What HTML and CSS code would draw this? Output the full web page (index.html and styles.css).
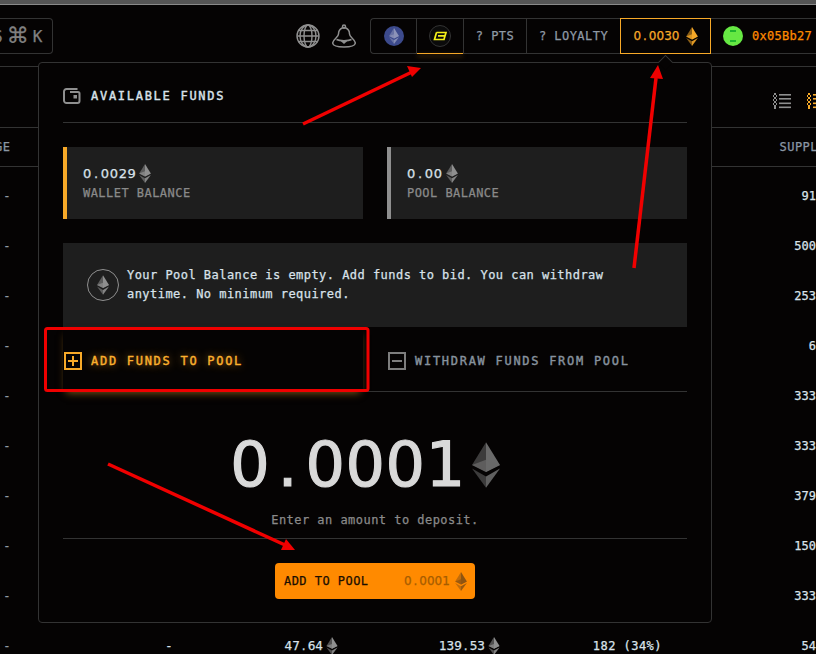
FILE: index.html
```html
<!DOCTYPE html>
<html lang="en">
<head>
<meta charset="utf-8">
<title>Available funds</title>
<link rel="stylesheet" href="styles.css">
</head>
<body>
<svg class="defs" width="0" height="0" aria-hidden="true">
  <symbol id="eth" viewBox="0 0 16 26">
    <polygon points="8,0 0,13 8,17" fill="currentColor" opacity=".55"/>
    <polygon points="8,0 16,13 8,17" fill="currentColor"/>
    <polygon points="8,10 0,13 8,17 16,13" fill="currentColor" opacity=".75"/>
    <polygon points="0,15 8,26 8,19.5" fill="currentColor" opacity=".55"/>
    <polygon points="16,15 8,26 8,19.5" fill="currentColor" opacity=".9"/>
  </symbol>
  <symbol id="list" viewBox="0 0 18 16">
    <g fill="currentColor">
      <rect x="6" y="1" width="12" height="1.6"/><rect x="6" y="5" width="12" height="1.6"/>
      <rect x="6" y="9.5" width="12" height="1.6"/><rect x="6" y="13.5" width="12" height="1.6"/>
      <rect x="1" y="0" width="2" height="2"/><rect x="0" y="2" width="1" height="2"/><rect x="3" y="2" width="1" height="2"/>
      <rect x="1" y="4" width="2" height="2"/><rect x="0" y="6" width="1" height="2"/><rect x="3" y="6" width="1" height="2"/>
      <rect x="1" y="8" width="2" height="2"/><rect x="0" y="10" width="1" height="2"/><rect x="3" y="10" width="1" height="2"/>
      <rect x="1" y="12" width="2" height="2"/><rect x="1" y="14" width="2" height="2"/>
    </g>
  </symbol>
</svg>

<div class="page">
  <div class="strip"></div>

  <header class="header">
    <div class="search"><span class="search-s">S</span><span class="search-cmd">⌘</span><span>K</span></div>
    <div class="header-right">
      <svg class="hicon" viewBox="0 0 24 24" aria-hidden="true">
        <g fill="none" stroke="#8f8f8f" stroke-width="1.4">
          <circle cx="12" cy="12" r="11"/><ellipse cx="12" cy="12" rx="4" ry="11"/><ellipse cx="12" cy="12" rx="8" ry="11"/>
          <path d="M1 12h22M2.500 6.500h19M2.500 17.500h19"/>
        </g>
      </svg>
      <svg class="hicon" viewBox="0 0 24 24" aria-hidden="true">
        <g fill="none" stroke="#8f8f8f" stroke-width="1.500">
          <circle cx="12" cy="2.500" r="1.500"/>
          <path d="M10 4C8 5 6.500 7 6.500 10c0 3.500-5.500 5-5.800 9 0 3 6.300 4 11.300 4s11.300-1 11.300-4c-.3-4-5.800-5.500-5.800-9 0-3-1.500-5-3.500-6z"/>
          <path d="M4.500 15.500c3 1.500 12 1.500 15 0"/>
        </g>
        <polygon points="8,16.500 16,16.500 12,20" fill="#8f8f8f"/>
      </svg>
      <nav class="group">
        <div class="cell cell-net"><span class="net-dot"><svg class="eth-net"><use href="#eth"/></svg></span></div>
        <div class="cell cell-blast">
          <span class="blast-dot">
            <svg class="blast" viewBox="0 0 14 10" aria-hidden="true"><path d="M3.500 1.500H13l-1 3.300H5M12 4.800 11 8.500H1.500L3.500 1.500" fill="none" stroke="#f4f018" stroke-width="1.700"/></svg>
          </span>
        </div>
        <div class="cell cell-pts">? PTS</div>
        <div class="cell cell-loyalty">? LOYALTY</div>
        <div class="cell cell-balance num"><span>0<span class="dot">.</span>0030</span><svg class="eth-bal"><use href="#eth"/></svg></div>
        <div class="user">
          <span class="avatar"><i></i><i></i></span>
          <span class="address">0x05Bb27</span>
        </div>
      </nav>
    </div>
  </header>

  <section class="table">
    <div class="toolbar">
      <svg class="list-icon"><use href="#list"/></svg>
      <svg class="list-icon list-on"><use href="#list"/></svg>
    </div>
    <div class="thead"><span>GE</span><span>SUPPL</span></div>
    <div class="tbody">
      <div class="row"><span class="c1">-</span><span class="c6">91</span></div>
      <div class="row"><span class="c1">-</span><span class="c6">500</span></div>
      <div class="row"><span class="c1">-</span><span class="c6">253</span></div>
      <div class="row"><span class="c1">-</span><span class="c6">6</span></div>
      <div class="row"><span class="c1">-</span><span class="c6">333</span></div>
      <div class="row"><span class="c1">-</span><span class="c6">333</span></div>
      <div class="row"><span class="c1">-</span><span class="c6">379</span></div>
      <div class="row"><span class="c1">-</span><span class="c6">150</span></div>
      <div class="row"><span class="c1">-</span><span class="c6">333</span></div>
      <div class="row">
        <span class="c1">-</span>
        <span class="c2">-</span>
        <span class="c3 num"><span>47<span class="dot">.</span>64</span><svg class="eth-row"><use href="#eth"/></svg></span>
        <span class="c4 num"><span>139<span class="dot">.</span>53</span><svg class="eth-row"><use href="#eth"/></svg></span>
        <span class="c5">182 (34%)</span>
        <span class="c6">54</span>
      </div>
    </div>
  </section>

  <aside class="modal">
    <span class="notch"></span>
    <div class="modal-head">
      <svg class="wallet" viewBox="0 0 18 16" aria-hidden="true">
        <path d="M14.500 1H3.500A2.500 2.500 0 0 0 1 3.500v9A2.500 2.500 0 0 0 3.500 15h11a2 2 0 0 0 2-2V5.500A1.500 1.500 0 0 0 15 4H7" fill="none" stroke="#8f8f8f" stroke-width="2"/>
        <rect x="10.500" y="7" width="3.500" height="3.500" fill="#8f8f8f"/>
      </svg>
      <h2 class="title">AVAILABLE FUNDS</h2>
    </div>

    <div class="cards">
      <div class="card card-wallet">
        <div class="card-value num"><span>0<span class="dot">.</span>0029</span><svg class="eth-card"><use href="#eth"/></svg></div>
        <div class="card-label">WALLET BALANCE</div>
      </div>
      <div class="card card-pool">
        <div class="card-value num"><span>0<span class="dot">.</span>00</span><svg class="eth-card"><use href="#eth"/></svg></div>
        <div class="card-label">POOL BALANCE</div>
      </div>
    </div>

    <div class="info">
      <span class="info-icon"><svg class="eth-info"><use href="#eth"/></svg></span>
      <p class="info-text">Your Pool Balance is empty. Add funds to bid. You can withdraw<br>anytime. No minimum required.</p>
    </div>

    <div class="tabs">
      <div class="tab tab-on">
        <svg class="tab-icon" viewBox="0 0 18 18" aria-hidden="true"><rect x="1" y="1" width="16" height="16" fill="none" stroke="currentColor" stroke-width="2"/><path d="M4 9h10M9 4v10" stroke="currentColor" stroke-width="2"/></svg>
        <span>ADD FUNDS TO POOL</span>
      </div>
      <div class="tab">
        <svg class="tab-icon" viewBox="0 0 18 18" aria-hidden="true"><rect x="1" y="1" width="16" height="16" fill="none" stroke="currentColor" stroke-width="2"/><path d="M4 9h10" stroke="currentColor" stroke-width="2"/></svg>
        <span>WITHDRAW FUNDS FROM POOL</span>
      </div>
    </div>

    <div class="amount">
      <div class="amount-value num"><span>0<span class="dot">.</span>0001</span><svg class="eth-big"><use href="#eth"/></svg></div>
      <div class="amount-hint">Enter an amount to deposit.</div>
    </div>

    <div class="actions">
      <button class="submit" type="button">
        <span>ADD TO POOL</span>
        <span class="submit-amt num"><span>0<span class="dot">.</span>0001</span><svg class="eth-btn"><use href="#eth"/></svg></span>
      </button>
    </div>
  </aside>

  <svg class="marks" viewBox="0 0 816 654" aria-hidden="true">
    <rect x="45.500" y="328.500" width="322.500" height="62" rx="2" fill="none" stroke="#f00000" stroke-width="3"/>
    <g stroke="#f00000" stroke-width="3.500" fill="#f00000">
      <line x1="303" y1="124" x2="412" y2="72"/>
      <polygon points="421,68 407,66 412,77" stroke="none"/>
      <line x1="634" y1="268" x2="656" y2="78"/>
      <polygon points="658,65 650,78 663,79" stroke="none"/>
      <line x1="108" y1="464" x2="285" y2="545"/>
      <polygon points="295,550 281,550 286,539" stroke="none"/>
    </g>
  </svg>
</div>
</body>
</html>
```

FILE: styles.css
```css
* { box-sizing: border-box; }
html, body { margin: 0; padding: 0; background: #050303; }
body {
  width: 816px;
  height: 654px;
  overflow: hidden;
  font-family: "DejaVu Sans Mono", "Liberation Mono", monospace;
  font-size: 12px;
  letter-spacing: .46px;
  color: #d9e2ea;
  -webkit-text-stroke: .25px currentColor;
}
svg { display: block; flex: none; }
.defs { position: absolute; }
.page { position: relative; width: 816px; height: 654px; overflow: hidden; }

/* numbers: plain zeros with the point on a full-width cell */
.num { font-family: "DejaVu Sans", "Liberation Sans", sans-serif; letter-spacing: .05px; }
.dot { padding: 0 .16em; }

.strip { height: 5px; background: #555; border-bottom: 1px solid #8a8a8a; }

/* header */
.header {
  height: 62px;
  border-bottom: 1px solid #333;
  display: flex;
  align-items: flex-start;
  padding-top: 13px;
}
.search {
  width: 53px;
  height: 36px;
  border: 1px solid #333;
  border-left: 0;
  border-radius: 0 4px 4px 0;
  display: flex;
  align-items: center;
  gap: 4px;
  color: #808080;
  font-size: 16px;
  letter-spacing: 0;
  overflow: hidden;
  flex: none;
}
.search-s { margin-left: -7px; }
.search-cmd { font-family: "DejaVu Sans", sans-serif; font-size: 22px; line-height: 1; }
.header-right { margin-left: auto; display: flex; align-items: center; height: 36px; }
.hicon { width: 24px; height: 24px; margin-right: 12px; }
.hicon + .hicon { margin-right: 14px; }
.group {
  display: flex;
  height: 36px;
  width: 446px;
  border: 1px solid #333;
  border-right: 0;
  border-radius: 4px 0 0 4px;
  color: #8f9aa6;
}
.cell {
  display: flex;
  align-items: center;
  justify-content: center;
  border-right: 1px solid #333;
  flex: none;
}
.cell-net { width: 46px; }
.cell-blast { width: 47px; position: relative; }
.cell-blast::after {
  content: "";
  position: absolute;
  left: 0; right: 0; bottom: -1px;
  height: 1px;
  background: #f7a928;
  box-shadow: 0 2px 5px rgba(247,169,40,.55);
}
.cell-pts { width: 63px; }
.cell-loyalty { width: 93px; border-right: 0; }
.cell-balance {
  width: 91px;
  height: 36px;
  margin-top: -1px;
  border: 1px solid #f7a928;
  color: #f7a928;
  gap: 6px;
}
.net-dot {
  width: 20px; height: 20px; border-radius: 50%;
  background: #3c4a8c;
  display: flex; align-items: center; justify-content: center;
  color: #8c93b8;
}
.eth-net { width: 10px; height: 16px; }
.blast-dot {
  width: 22px; height: 22px; border-radius: 50%;
  background: #0b0b0b;
  border: 1px solid #333;
  display: flex; align-items: center; justify-content: center;
}
.blast { width: 14px; height: 10px; }
.eth-bal { width: 12px; height: 19px; color: #f7a928; }
.user { display: flex; align-items: center; margin-left: 12px; gap: 9px; flex: none; }
.avatar {
  width: 20px; height: 20px; border-radius: 50%;
  background: #66e843;
  display: flex; flex-direction: column; align-items: center; justify-content: center;
  gap: 8px;
  flex: none;
}
.avatar i { display: block; width: 6px; height: 2px; background: #1fb52e; }
.address { color: #ff8a00; letter-spacing: .28px; white-space: nowrap; }

/* table behind the popover */
.table { color: #d9e2ea; }
.toolbar {
  height: 61px;
  border-bottom: 1px solid #333;
  display: flex;
  justify-content: flex-end;
  align-items: flex-start;
  gap: 16px;
  padding-top: 26px;
  margin-right: -9px;
  color: #8f8f8f;
}
.list-icon { width: 18px; height: 16px; }
.list-on { color: #f7a928; }
.thead {
  height: 39px;
  border-bottom: 1px solid #333;
  display: flex;
  justify-content: space-between;
  align-items: center;
  color: #8b97a5;
  letter-spacing: .46px;
}
.thead span:first-child { margin-left: -5px; }
.thead span:last-child { margin-right: -2px; }
.tbody { padding-top: 4px; }
.row {
  height: 50px;
  display: grid;
  grid-template-columns: 14px 162px 162px 162px 162px 154px;
  align-items: center;
}
.row > span { text-align: right; white-space: nowrap; }
.row > .c1 { text-align: center; color: #8f9aa6; }
.c2 { padding-right: 3px; }
.row > .c3, .row > .c4 { display: flex; align-items: center; justify-content: flex-end; gap: 3px; }
.c6 { grid-column: 6; letter-spacing: 0; }
.eth-row { width: 12px; height: 18px; color: #8f8f8f; }

/* popover */
.modal {
  position: absolute;
  left: 38px;
  top: 62px;
  width: 674px;
  height: 561px;
  background: #050303;
  border: 1px solid #333;
  border-radius: 4px;
  padding: 0 24px;
}
.notch {
  position: absolute;
  right: 40px;
  top: -6px;
  width: 11px;
  height: 11px;
  background: #050303;
  border-left: 1px solid #333;
  border-top: 1px solid #333;
  transform: rotate(45deg);
}
.modal-head {
  height: 60px;
  border-bottom: 1px solid #333;
  display: flex;
  align-items: center;
  gap: 10px;
  padding-top: 7px;
}
.wallet { width: 18px; height: 16px; }
.title {
  margin: 0;
  font-size: 12px;
  font-weight: 400;
  letter-spacing: 1.72px;
  -webkit-text-stroke: .4px currentColor;
}

.cards {
  margin-top: 24px;
  display: grid;
  grid-template-columns: 300px 300px;
  gap: 24px;
}
.card {
  height: 72px;
  background: #1e1e1e;
  border-left: 4px solid #f7a928;
  padding: 16px 0 0 16px;
}
.card-pool { border-left-color: #8f8f8f; }
.card-value {
  display: flex;
  align-items: center;
  gap: 3px;
  height: 20px;
  font-size: 13px;
  letter-spacing: .63px;
}
.eth-card { width: 12px; height: 19px; color: #8f8f8f; }
.card-label { margin-top: 1px; color: #8a8a8a; line-height: 18px; }

.info {
  margin-top: 24px;
  height: 84px;
  background: #1e1e1e;
  display: flex;
  align-items: center;
  gap: 8px;
  padding: 0 24px;
}
.info-icon {
  width: 32px; height: 32px;
  border: 1px solid #8f8f8f;
  border-radius: 50%;
  display: flex; align-items: center; justify-content: center;
  flex: none;
}
.eth-info { width: 12px; height: 20px; color: #8f8f8f; }
.info-text { margin: 0; line-height: 19px; }

.tabs {
  margin-top: 1px;
  height: 64px;
  border-bottom: 1px solid #333;
  display: grid;
  grid-template-columns: 300px 300px;
  gap: 24px;
}
.tab {
  display: flex;
  align-items: center;
  gap: 9px;
  padding: 3px 0 0 1px;
  color: #7d7d7d;
  letter-spacing: 1.72px;
  -webkit-text-stroke: .4px currentColor;
}
.tab span { color: #87929e; }
.tab-on {
  color: #f7a928;
  border-bottom: 1px solid #f7a928;
  margin-bottom: -1px;
  box-shadow: 0 4px 8px -3px rgba(247,169,40,.5);
}
.tab-on span { color: #fbb02e; text-shadow: 0 0 9px rgba(247,169,40,.8); }
.tab-icon { width: 18px; height: 18px; }

.amount {
  height: 147px;
  border-bottom: 1px solid #333;
  display: flex;
  flex-direction: column;
  align-items: center;
}
.amount-value {
  margin-top: 43px;
  height: 60px;
  display: flex;
  align-items: center;
  padding-right: 20px;
  gap: 6px;
  font-size: 62px;
  letter-spacing: .6px;
  color: #d9d9d9;
  line-height: 60px;
  -webkit-text-stroke: 1.200px currentColor;
}
.amount-value .dot { padding: 0 .12em; }
.eth-big { width: 28px; height: 46px; color: #6a6a6a; }
.amount-hint { margin-top: 18px; color: #8a8a8a; }

.actions { display: flex; justify-content: center; padding-top: 24px; }
.submit {
  width: 200px;
  height: 36px;
  border: 0;
  border-radius: 4px;
  background: #ff8a00;
  color: #1a0e00;
  font: inherit;
  letter-spacing: .46px;
  display: flex;
  align-items: center;
  justify-content: space-between;
  padding: 0 8px 0 9px;
}
.submit-amt { display: flex; align-items: center; gap: 5px; color: #a55c00; }
.eth-btn { width: 12px; height: 19px; color: #8f5410; }

.marks { position: absolute; left: 0; top: 0; width: 816px; height: 654px; pointer-events: none; }
```
